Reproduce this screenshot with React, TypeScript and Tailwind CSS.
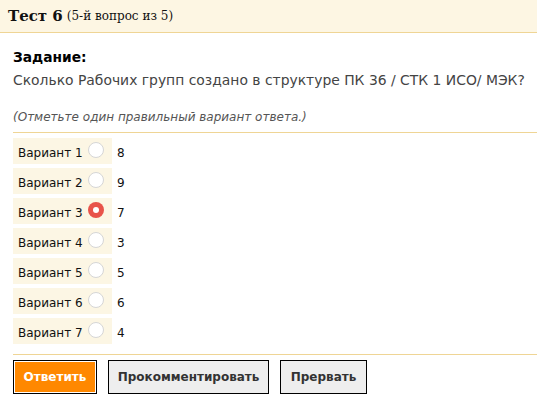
import React, { useState } from 'react';

const options = [
  { label: 'Вариант 1', value: '8' },
  { label: 'Вариант 2', value: '9' },
  { label: 'Вариант 3', value: '7' },
  { label: 'Вариант 4', value: '3' },
  { label: 'Вариант 5', value: '5' },
  { label: 'Вариант 6', value: '6' },
  { label: 'Вариант 7', value: '4' },
];

const Radio = ({ checked, onClick }: { checked: boolean; onClick: () => void }) => (
  <button
    type="button"
    onClick={onClick}
    className={`flex h-4 w-4 items-center justify-center rounded-full ${
      checked ? 'bg-[#e8534a]' : 'border border-[#d6d6d6] bg-white'
    }`}
  >
    {checked && <span className="h-[6px] w-[6px] rounded-full bg-white" />}
  </button>
);

const App = () => {
  const [selected, setSelected] = useState(2);

  return (
    <div className="min-h-[408px] w-[537px] bg-white font-['DejaVu_Sans',sans-serif] text-[13px]">
      {/* Header */}
      <div className="flex h-[33px] items-center border-b border-[#efd595] bg-[#fdf6e3] px-2 font-['DejaVu_Serif',serif] text-[#111]">
        <span className="text-[15px] font-bold">Тест 6</span>
        <span className="ml-1 text-[12px]">(5-й вопрос из 5)</span>
      </div>

      <div className="pl-[13px]">
        <div className="pt-[14px] text-[13.8px] font-bold leading-[20px] text-black">Задание:</div>
        <div className="mt-[3px] text-[13.9px] leading-[20px] text-[#444]">
          Сколько Рабочих групп создано в структуре ПК 36 / СТК 1 ИСО/ МЭК?
        </div>
        <div className="mt-[19px] text-[12px] italic leading-[16px] text-[#555]">
          (Отметьте один правильный вариант ответа.)
        </div>

        <div className="mt-[7px] border-t border-[#efd595] pt-[5px]">
          <div className="flex flex-col gap-[4px]">
            {options.map((o, i) => (
              <div key={o.label} className="flex h-[26px] items-start">
                <div className="flex h-full w-[99px] items-start bg-[#fcf6e4] pl-[5px] text-[12px] text-[#111]">
                  <span className="mt-[7px] leading-[16px]">{o.label}</span>
                  <span className="ml-[5px] mt-[4px]">
                    <Radio checked={selected === i} onClick={() => setSelected(i)} />
                  </span>
                </div>
                <span className="ml-[5px] mt-[7px] text-[12px] leading-[16px] text-[#111]">{o.value}</span>
              </div>
            ))}
          </div>
        </div>

        <div className="mt-[10px] flex gap-[11px] border-t border-[#efd595] pt-[5px]">
          <button className="h-[34px] w-[84px] border border-black bg-[#ff8800] p-0 text-[12px] font-bold text-white outline outline-1 -outline-offset-2 outline-white">
            Ответить
          </button>
          <button className="h-[34px] w-[161px] border border-black bg-[#eeeeee] text-[12px] font-bold text-[#333]">
            Прокомментировать
          </button>
          <button className="h-[34px] w-[87px] border border-black bg-[#eeeeee] text-[12px] font-bold text-[#333]">
            Прервать
          </button>
        </div>
      </div>
    </div>
  );
};

export default App;
